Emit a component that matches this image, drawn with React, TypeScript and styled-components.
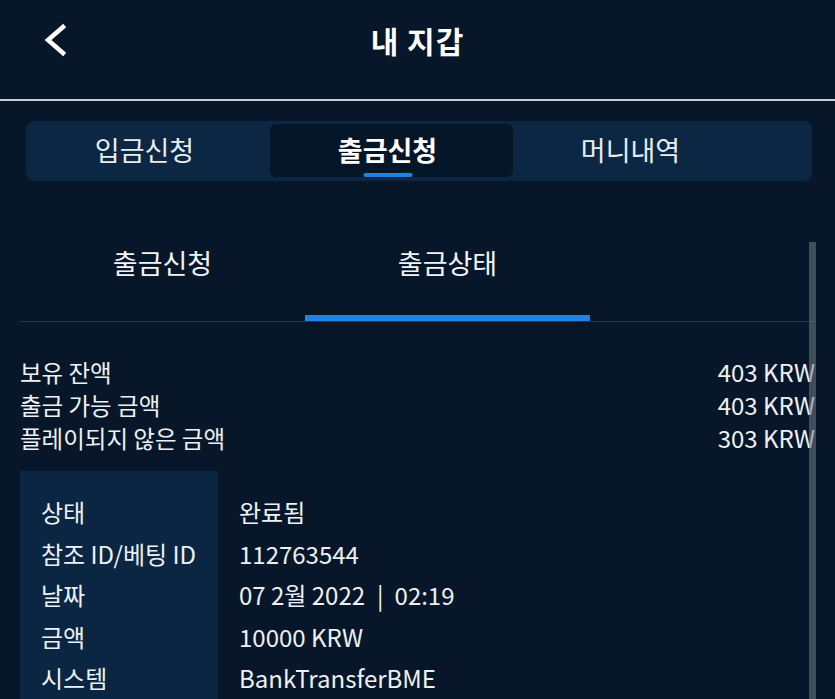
import styled, { createGlobalStyle, css } from 'styled-components';

const GlobalStyle = createGlobalStyle`
  html, body {
    margin: 0;
    padding: 0;
    background: #071729;
  }
  body {
    font-family: 'Noto Sans CJK KR', 'Noto Sans', sans-serif;
    color: #ffffff;
  }
`;

const Page = styled.div`
  position: relative;
  width: 835px;
  height: 699px;
  overflow: hidden;
  background: #071729;
`;

// 상단 헤더
const Header = styled.header`
  display: grid;
  grid-template-columns: 1fr auto 1fr;
  align-items: center;
  height: 80px;
  padding-bottom: 19px;
  border-bottom: 2px solid #c9cdd2;
`;

const BackButton = styled.button`
  justify-self: start;
  display: flex;
  align-items: center;
  margin-left: 42px;
  padding: 0;
  border: none;
  background: transparent;
  cursor: pointer;
`;

const Title = styled.h1`
  margin: 0;
  font-size: 30px;
  font-weight: 700;
  letter-spacing: 1px;
  color: #ffffff;
`;

// 상단 세그먼트 탭
const Segment = styled.nav`
  display: grid;
  grid-template-columns: repeat(3, 243px);
  height: 60px;
  margin: 20px 23px 0 26px;
  padding: 3px 0 4px 1px;
  box-sizing: border-box;
  border-radius: 8px;
  background: #0b2743;
`;

const SegTab = styled.div<{ $active?: boolean }>`
  position: relative;
  display: flex;
  align-items: center;
  justify-content: center;
  padding-right: 8px;
  padding-bottom: 2px;
  border-radius: 6px;
  font-size: 27px;
  font-weight: 400;
  color: #e9edf2;

  ${({ $active }) =>
    $active &&
    css`
      background: #061629;
      font-weight: 700;
      color: #ffffff;

      &::after {
        content: '';
        position: absolute;
        bottom: 0;
        left: calc(50% - 4px);
        transform: translateX(-50%);
        width: 49px;
        height: 4px;
        border-radius: 2px;
        background: #1c84e4;
      }
    `}
`;

const Body = styled.main`
  padding: 0 20px;
`;

// 하위 탭
const SubTabs = styled.div`
  display: grid;
  grid-template-columns: repeat(2, 285px);
  margin-top: 40px;
  border-bottom: 1px solid #26374a;
`;

const SubTab = styled.div<{ $active?: boolean }>`
  position: relative;
  height: 100px;
  padding-top: 27px;
  box-sizing: border-box;
  text-align: center;
  font-size: 27px;
  line-height: 30px;
  color: #f2f4f7;

  ${({ $active }) =>
    $active &&
    css`
      &::after {
        content: '';
        position: absolute;
        left: 0;
        right: 0;
        bottom: 0;
        height: 6px;
        background: #1c84e4;
      }
    `}
`;

// 잔액
const Balances = styled.div`
  margin-top: 33px;
`;

const BalanceRow = styled.div`
  display: flex;
  justify-content: space-between;
  align-items: center;
  height: 33px;
  font-size: 24px;
  color: #eef1f4;
`;

const BalanceLabel = styled.span`
  font-size: 23.5px;
`;

// 상세 내역
const DetailTable = styled.dl`
  display: grid;
  grid-template-columns: 198px 1fr;
  grid-auto-rows: 41.5px;
  margin: 17px 0 0;
  padding-top: 20px;
  background: linear-gradient(to right, #0b2642 198px, transparent 198px);
`;

const Label = styled.dt`
  display: flex;
  align-items: center;
  padding-left: 21px;
  font-size: 24px;
  color: #eef1f4;
`;

const Value = styled.dd`
  display: flex;
  align-items: center;
  margin: 0;
  padding-left: 21px;
  font-size: 24px;
  color: #eef1f4;
  white-space: pre;
`;

const Separator = styled.span`
  margin: 0 11px 0 12px;
`;

const ScrollThumb = styled.div`
  position: absolute;
  top: 242px;
  bottom: 0;
  left: 809px;
  width: 7px;
  background: rgba(112, 122, 136, 0.55);
`;

const balances = [
  { label: '보유 잔액', value: '403 KRW' },
  { label: '출금 가능 금액', value: '403 KRW' },
  { label: '플레이되지 않은 금액', value: '303 KRW' },
];

const details = [
  { label: '상태', value: '완료됨' },
  { label: '참조 ID/베팅 ID', value: '112763544' },
  {
    label: '날짜',
    value: (
      <>
        07 2월 2022<Separator>|</Separator>02:19
      </>
    ),
  },
  { label: '금액', value: '10000 KRW' },
  { label: '시스템', value: 'BankTransferBME' },
];

function App() {
  return (
    <>
      <GlobalStyle />
      <Page>
        <Header>
          <BackButton aria-label="뒤로">
            <svg width="26" height="36" viewBox="0 0 26 36">
              <polyline
                points="21,5 6,18 21,31"
                fill="none"
                stroke="#ffffff"
                strokeWidth="4.5"
                strokeLinecap="square"
              />
            </svg>
          </BackButton>
          <Title>내 지갑</Title>
          <div />
        </Header>

        <Segment>
          <SegTab>입금신청</SegTab>
          <SegTab $active>출금신청</SegTab>
          <SegTab>머니내역</SegTab>
        </Segment>

        <Body>
          <SubTabs>
            <SubTab>출금신청</SubTab>
            <SubTab $active>출금상태</SubTab>
          </SubTabs>

          <Balances>
            {balances.map((b) => (
              <BalanceRow key={b.label}>
                <BalanceLabel>{b.label}</BalanceLabel>
                <span>{b.value}</span>
              </BalanceRow>
            ))}
          </Balances>

          <DetailTable>
            {details.map((d) => [
              <Label key={d.label + '-l'}>{d.label}</Label>,
              <Value key={d.label + '-v'}>{d.value}</Value>,
            ])}
          </DetailTable>
        </Body>

        <ScrollThumb />
      </Page>
    </>
  );
}

export default App;
